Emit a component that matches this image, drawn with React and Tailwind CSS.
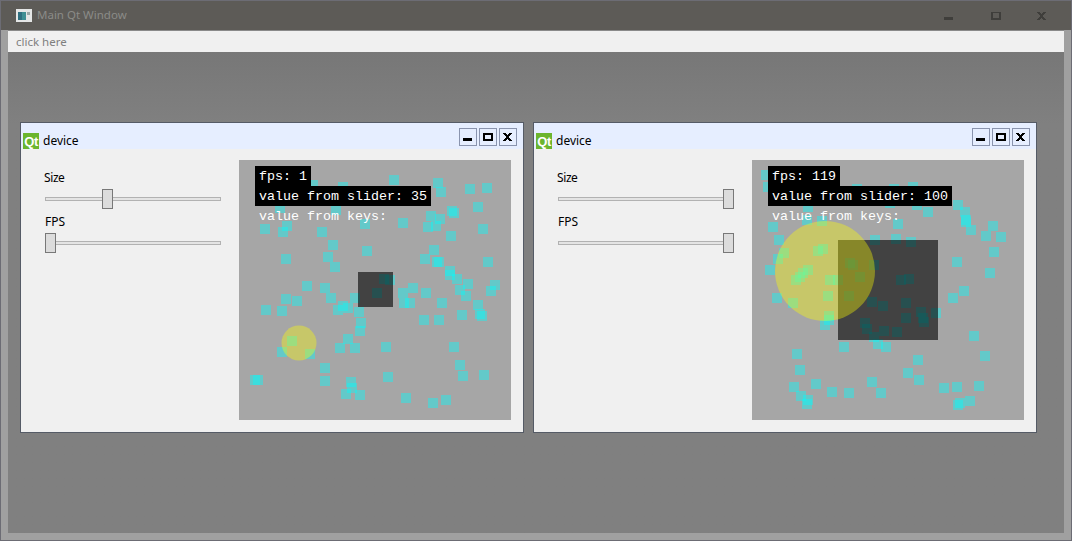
const S1 = [[394,180],[438,183],[441,192],[470,189],[487,188],[452,211],[454,213],[478,207],[431,216],[440,219],[428,227],[436,226],[451,236],[483,229],[403,223],[365,224],[265,229],[287,226],[283,232],[322,232],[333,245],[367,251],[328,257],[335,267],[286,259],[434,250],[425,259],[437,262],[439,262],[450,271],[450,275],[457,279],[468,284],[488,262],[495,285],[307,286],[325,288],[384,279],[390,280],[413,288],[426,293],[403,293],[460,290],[343,187],[313,185],[280,208],[336,210],[377,293],[286,299],[297,301],[266,310],[282,311],[331,298],[355,298],[343,306],[338,310],[348,308],[359,312],[361,323],[360,331],[348,339],[340,348],[355,348],[386,347],[282,352],[292,341],[310,354],[325,368],[325,381],[351,382],[352,388],[346,394],[360,395],[388,377],[406,398],[433,403],[446,400],[454,347],[460,365],[463,376],[484,375],[424,320],[439,320],[462,315],[478,305],[480,314],[482,316],[442,303],[404,303],[410,303],[466,296],[491,291],[255,380],[258,380]];
const S2 = [[766,175],[768,187],[857,189],[894,189],[913,187],[917,205],[890,203],[808,207],[928,212],[958,205],[965,212],[966,220],[966,222],[971,230],[993,226],[986,236],[1001,237],[994,252],[957,262],[990,273],[898,224],[822,221],[807,220],[773,227],[779,240],[875,240],[896,239],[911,242],[784,253],[778,259],[818,251],[823,249],[770,270],[850,263],[853,265],[874,265],[808,270],[803,273],[800,277],[796,280],[830,280],[838,280],[860,277],[901,280],[909,279],[964,291],[953,298],[777,298],[793,303],[828,296],[849,296],[872,302],[883,306],[906,303],[921,312],[936,313],[906,318],[923,318],[924,322],[865,323],[867,329],[884,331],[897,332],[829,316],[829,320],[825,325],[874,337],[878,344],[886,347],[844,347],[974,336],[985,356],[797,354],[800,370],[918,360],[908,373],[919,380],[872,382],[881,393],[816,384],[794,387],[801,396],[808,400],[807,404],[832,392],[849,393],[944,388],[957,387],[979,386],[970,401],[960,403],[958,405]];

function MinIcon({ color }) {
  return <svg width="10" height="9" viewBox="0 0 10 9"><rect x="0" y="5" width="9" height="3" fill={color} /></svg>;
}
function MaxIcon({ color, h = 7 }) {
  return <svg width="10" height="9" viewBox="0 0 10 9"><rect x="1" y={8 - h + 0} width="8" height={h - 1} fill="none" stroke={color} strokeWidth="2" /></svg>;
}
function CloseIcon({ color }) {
  return <svg width="10" height="9" viewBox="0 0 10 9"><path d="M0 0h3v1h1v1h1V1h1V0h3v1H8v1H7v1H6v2h1v1h1v1h1v1H6V7H5V6H4v1H3v1H0V7h1V6h1V5h1V3H2V2H1V1H0z" fill={color} /></svg>;
}

function WinButton({ children }) {
  return <div className="w-[18px] h-[18px] border border-[#8a94ae] flex items-center justify-center">{children}</div>;
}

function Slider({ label, pos, labelClass }) {
  return (
    <div className="flex flex-col h-[44px]">
      <div className={`h-[17px] pt-[1px] text-[12px] leading-[17px] text-black ${labelClass}`}>{label}</div>
      <div className="relative h-[20px] mt-[4px] w-[176px] flex items-center">
        <div className="w-full h-[4px] border border-[#b2b2b2] bg-[#e4e4e4]" />
        <div className="absolute top-0 w-[11px] h-[20px] border border-[#787878] bg-[#dcdcdc]" style={{ left: pos }} />
      </div>
    </div>
  );
}

function Canvas({ squares, ox, rows, dark, circle }) {
  return (
    <div className="relative w-[272px] h-[260px] bg-[#a6a6a6] overflow-hidden">
      <svg className="absolute inset-0" width="272" height="260" viewBox="0 0 272 260">
        {squares.map(([x, y], i) => (
          <rect key={i} x={x - ox - 5} y={y - 160 - 5} width="10" height="10" fill="#00ffff" fillOpacity="0.4" />
        ))}
        <rect x={dark.x} y={dark.y} width={dark.s} height={dark.s} fill="#000" fillOpacity="0.6" />
        <circle cx={circle.x} cy={circle.y} r={circle.r} fill="#ffff00" fillOpacity="0.37" />
      </svg>
      <div className="relative flex flex-col items-start pt-[6px] pl-[16px] font-['Liberation_Mono',monospace] text-[13.33px] leading-[20px] text-white whitespace-pre">
        {rows.map((r, i) => (
          <div key={i} className={`h-[20px] px-[4px] pt-[1px] ${i < 2 ? "bg-black" : ""}`}>{r}</div>
        ))}
      </div>
    </div>
  );
}

function SubWindow({ squares, ox, rows, dark, circle, size, fps }) {
  return (
    <div className="w-[504px] h-[311px] border border-[#555b66] bg-[#f0f0f0] flex flex-col">
      <div className="h-[26px] bg-[#e6eeff] flex items-start pl-[2px] pr-[6px] pt-[5px]">
        <div className="mt-[5px] w-[16px] h-[16px] bg-[#6bb52e] flex items-center justify-center text-white font-bold text-[13px] leading-none font-['Liberation_Sans',sans-serif] tracking-[-0.5px]">Qt</div>
        <div className="mt-[5px] ml-[4px] text-[12px] leading-[16px] text-black">device</div>
        <div className="ml-auto flex gap-[2px]">
          <WinButton><MinIcon color="#000" /></WinButton>
          <WinButton><MaxIcon color="#000" /></WinButton>
          <WinButton><CloseIcon color="#000" /></WinButton>
        </div>
      </div>
      <div className="flex flex-1 pt-[11px] pl-[24px]">
        <div className="w-[194px] pt-[8px]">
          <Slider label="Size" pos={size} labelClass="tracking-[-0.4px] -ml-[1px]" />
          <Slider label="FPS" pos={fps} labelClass="" />
        </div>
        <Canvas squares={squares} ox={ox} rows={rows} dark={dark} circle={circle} />
      </div>
    </div>
  );
}

export default function App() {
  return (
    <div className="w-[1072px] h-[541px] border border-[#6c6c74] bg-[#a0a0a0] flex flex-col font-['Noto_Sans',sans-serif] overflow-hidden">
      <div className="h-[29px] bg-[#5d5b57] -mx-px flex items-center pl-[16px] pb-[1px] shrink-0">
        <svg width="16" height="13" viewBox="0 0 16 13">
          <rect x="0" y="0" width="16" height="13" fill="#e4e6e6" />
          <rect x="2" y="3" width="8" height="8" fill="#3f8f94" />
          <rect x="2" y="3" width="4" height="8" fill="#2e6f80" />
          <rect x="11" y="3" width="3" height="3" fill="#9aa8a8" />
        </svg>
        <div className="ml-[5px] text-[11.5px] text-[#8b8b88]">Main Qt Window</div>
        <div className="ml-auto mt-[2px] flex items-center pr-[25px] gap-[37px]">
          <MinIcon color="#3f3e3b" />
          <MaxIcon color="#3f3e3b" h={8} />
          <div className="-ml-[1px] flex"><CloseIcon color="#3f3e3b" /></div>
        </div>
      </div>
      <div className="flex-1 flex flex-col mx-[7px] mb-[7px] min-h-0">
        <div className="h-[22px] bg-[#f0f0f0] shrink-0 pl-[8px] text-[11.5px] leading-[22px] text-[#7f7f7f] border-t border-[#8a8a8a]">click here</div>
        <div className="flex-1 bg-[#808080] bg-gradient-to-b from-[#777777] to-[#808080] to-[15%] flex gap-[9px] pt-[70px] pl-[12px]">
          <SubWindow
            squares={S1}
            ox={239}
            rows={["fps: 1", "value from slider: 35", "value from keys:"]}
            dark={{ x: 119, y: 112, s: 35 }}
            circle={{ x: 60, y: 183, r: 17.5 }}
            size={57}
            fps={0}
          />
          <SubWindow
            squares={S2}
            ox={752}
            rows={["fps: 119", "value from slider: 100", "value from keys:"]}
            dark={{ x: 86, y: 80, s: 100 }}
            circle={{ x: 73, y: 111, r: 50 }}
            size={165}
            fps={165}
          />
        </div>
      </div>
    </div>
  );
}
